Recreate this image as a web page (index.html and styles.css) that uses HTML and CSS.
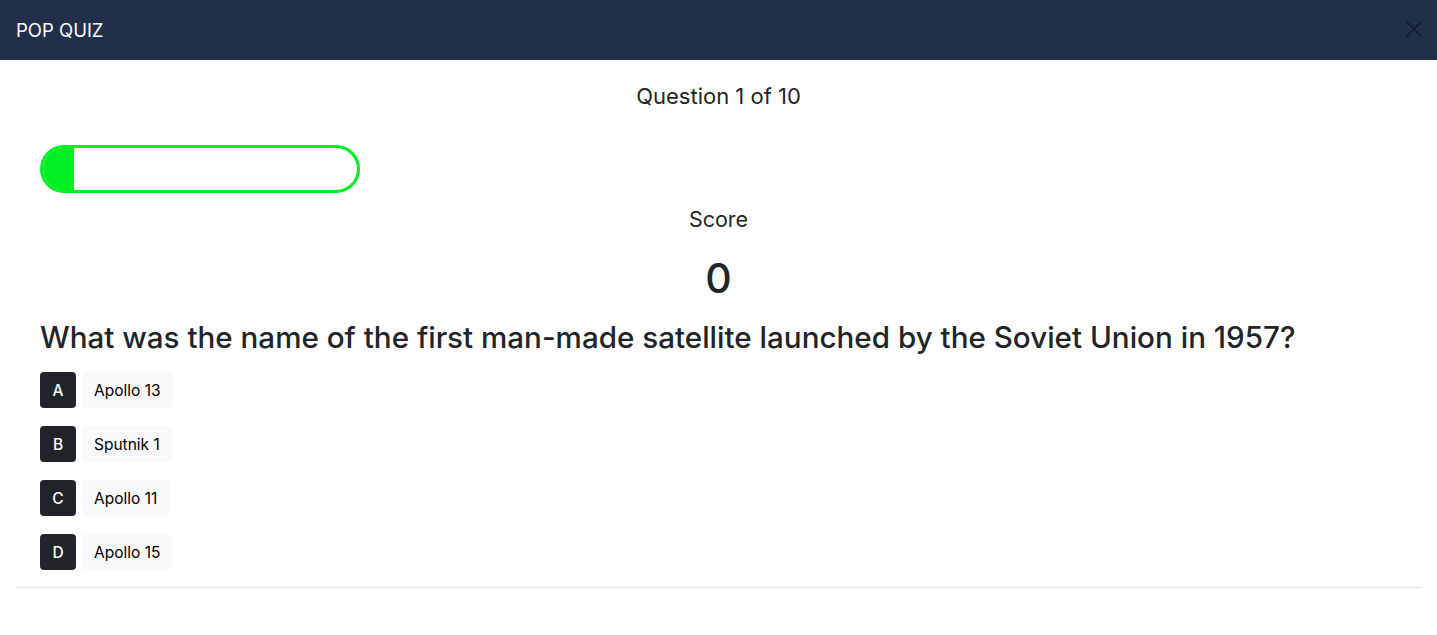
FILE: index.html
```html
<!DOCTYPE html>
<html>
<head>
<meta charset="utf-8">
<link rel="stylesheet" href="styles.css">
</head>
<body>
<div class="modal">
  <header class="modal-header">
    <h1 class="title">POP QUIZ</h1>
    <button class="close" aria-label="Close">
      <svg width="18" height="18" viewBox="0 0 18 18"><path d="M1.5 1.5L16.5 16.5M16.5 1.5L1.5 16.5" stroke="#131c2b" stroke-width="1.6" fill="none"/></svg>
    </button>
  </header>
  <main class="modal-body">
    <div class="counter">Question 1 of 10</div>
    <div class="progress"><div class="progress-fill" style="width:10%"></div></div>
    <div class="score-label">Score</div>
    <div class="score">0</div>
    <h2 class="question">What was the name of the first man-made satellite launched by the Soviet Union in 1957?</h2>
    <ul class="answers">
      <li class="answer"><span class="letter">A</span><span class="option">Apollo 13</span></li>
      <li class="answer"><span class="letter">B</span><span class="option">Sputnik 1</span></li>
      <li class="answer"><span class="letter">C</span><span class="option">Apollo 11</span></li>
      <li class="answer"><span class="letter">D</span><span class="option">Apollo 15</span></li>
    </ul>
  </main>
  <div class="footer-line"></div>
</div>
</body>
</html>
```
FILE: styles.css
```css
* { box-sizing: border-box; }
html, body { margin: 0; padding: 0; background: #fff; }
body { font-family: Inter, "Noto Sans", sans-serif; color: #212529; }
.modal-header {
  height: 60px;
  background: #212f4a;
  display: flex;
  align-items: center;
  justify-content: space-between;
  padding: 0 16px;
}
.title {
  margin: 0;
  color: #fff;
  font-size: 18.5px;
  font-weight: 400;
}
.close {
  background: none;
  border: 0;
  padding: 0;
  width: 18px;
  height: 18px;
  margin-right: -2px;
  margin-top: -2px;
  display: flex;
}
.modal-body {
  padding: 0 40px;
  display: flex;
  flex-direction: column;
}
.counter {
  text-align: center;
  font-size: 22px;
  margin-top: 22px;
  line-height: 28px;
}
.progress {
  margin-top: 35px;
  width: 320px;
  height: 48px;
  border: 3px solid #00ee22;
  border-radius: 24px;
  overflow: hidden;
  display: flex;
}
.progress-fill {
  background: #00ee22;
  height: 100%;
}
.score-label {
  text-align: center;
  font-size: 21.5px;
  line-height: 28px;
  margin-top: 12px;
}
.score {
  text-align: center;
  font-size: 41px;
  font-weight: 500;
  line-height: 48px;
  margin-top: 21px;
}
.question {
  margin: 17px 0 0;
  font-size: 29.6px;
  font-weight: 500;
  line-height: 36px;
}
.answers {
  list-style: none;
  margin: 17px 0 0;
  padding: 0;
  display: flex;
  flex-direction: column;
  gap: 18px;
}
.answer {
  display: flex;
  gap: 6px;
  align-items: center;
}
.letter {
  width: 36px;
  height: 36px;
  background: #212529;
  color: #fff;
  border-radius: 4px;
  display: flex;
  align-items: center;
  justify-content: center;
  font-size: 15.5px;
  font-weight: 500;
}
.option {
  height: 36px;
  background: #f8f9fa;
  border-radius: 4px;
  padding: 0 12px;
  display: flex;
  align-items: center;
  font-size: 15.5px;
  color: #000;
}
.footer-line {
  margin: 17px 16px 0;
  border-top: 1px solid #dee2e6;
}
```
